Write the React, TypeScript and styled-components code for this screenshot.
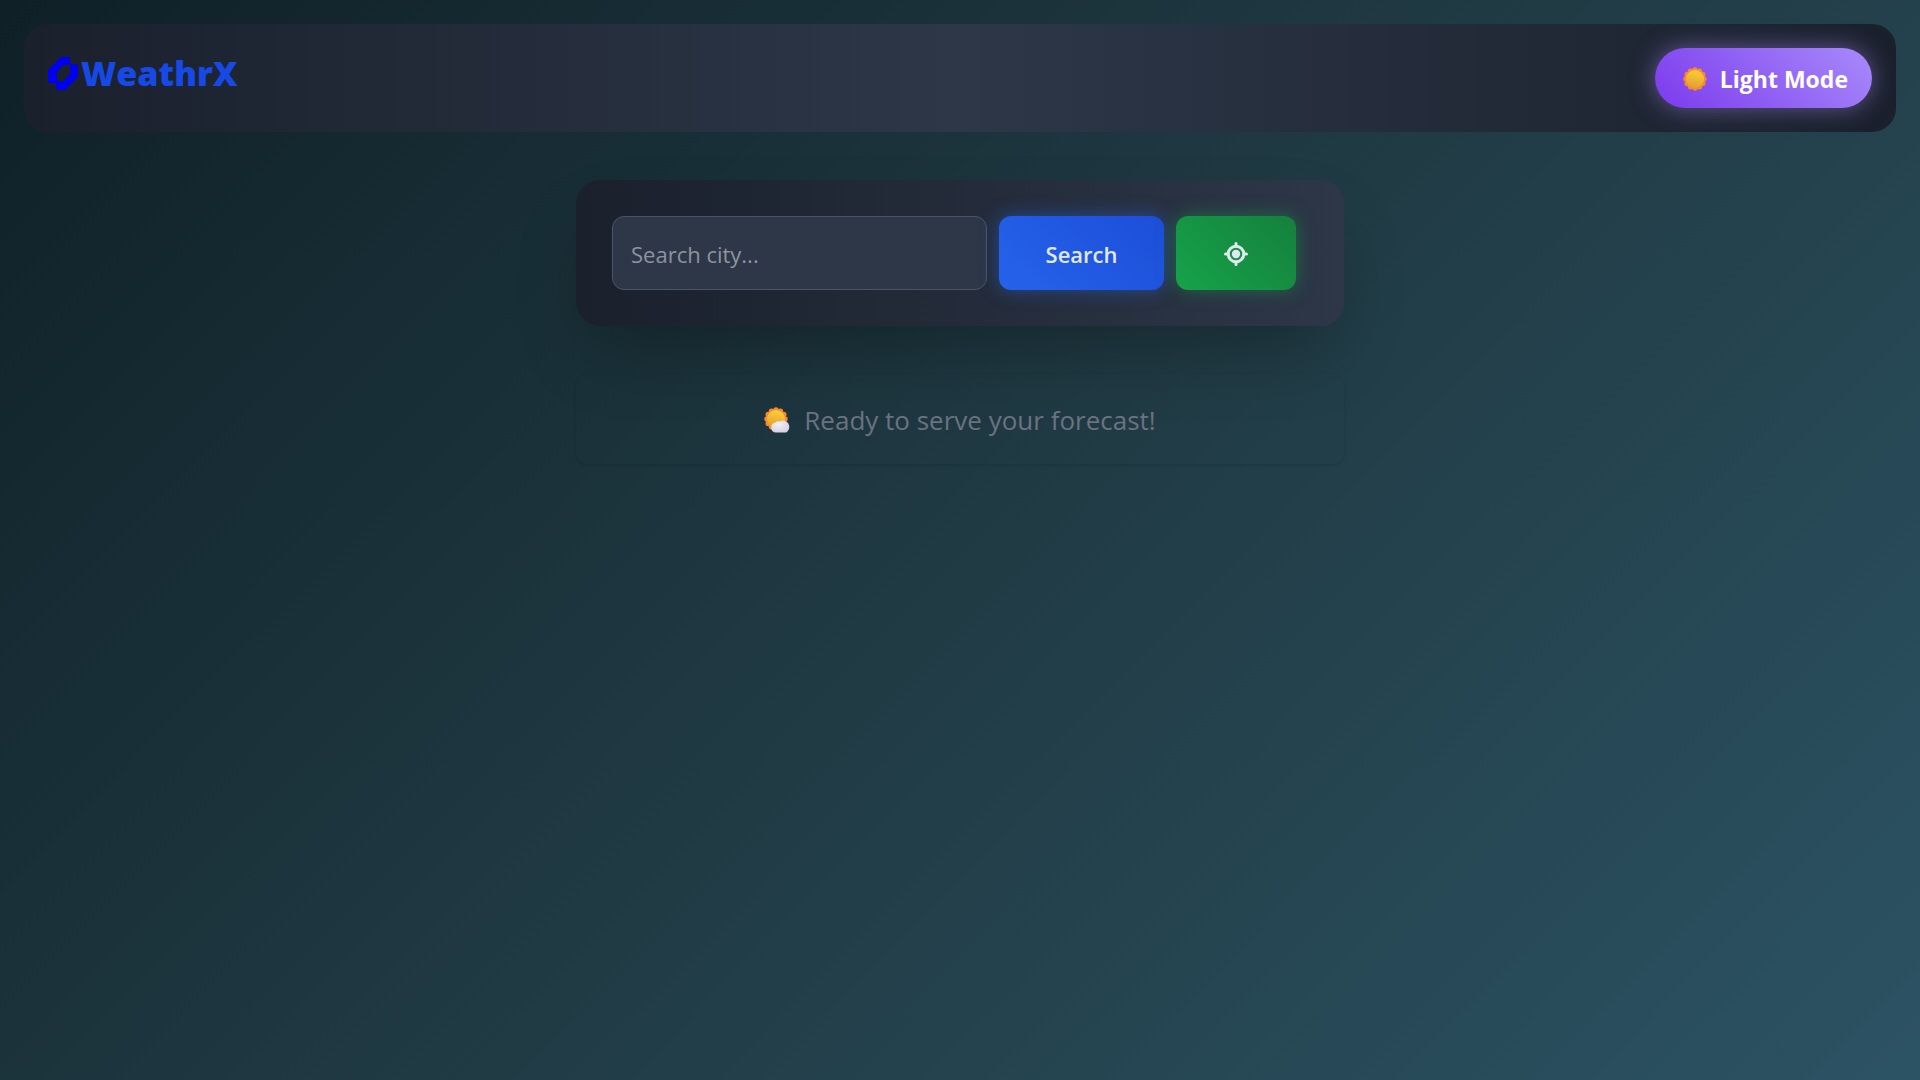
import React, { useState } from "react";
import styled, { createGlobalStyle } from "styled-components";

const GlobalStyle = createGlobalStyle`
  *, *::before, *::after { box-sizing: border-box; }
  body {
    margin: 0;
    min-height: 100vh;
    background: linear-gradient(135deg, #0f2027, #203a43, #2c5364) no-repeat;
    color: #e2e8f0;
    font-family: "Segoe UI", "Open Sans", "Noto Sans", sans-serif;
    font-size: 22px;
  }
`;

const Page = styled.div`
  display: flex;
  flex-direction: column;
  gap: 48px;
  padding: 24px;
`;

const Header = styled.header`
  display: flex;
  justify-content: space-between;
  align-items: flex-start;
  padding: 24px;
  border-radius: 24px;
  background: linear-gradient(90deg, #1a202c, #2d3748, #1a202c);
`;

const Brand = styled.a`
  display: flex;
  align-items: center;
  gap: 3px;
  color: #1749e6;
  font-size: 34px;
  font-weight: 800;
  line-height: 50px;
  text-decoration: none;
`;

const ModeButton = styled.button`
  display: flex;
  align-items: center;
  gap: 13px;
  height: 60px;
  padding: 2px 24px 0 28px;
  border: 0;
  border-radius: 30px;
  background: linear-gradient(45deg, #7c3aed, #a78bfa);
  box-shadow: 0 0 24px rgba(167, 139, 250, 0.5);
  color: #fff;
  font: inherit;
  font-size: 23px;
  font-weight: 700;
  cursor: pointer;
`;

const Main = styled.main`
  display: flex;
  flex-direction: column;
  gap: 48px;
  width: 100%;
  max-width: 768px;
  margin: 0 auto;
`;

const SearchForm = styled.form`
  display: flex;
  gap: 12px;
  padding: 36px 48px 36px 36px;
  border-radius: 24px;
  background: linear-gradient(90deg, #1a202c, #2d3748);
  box-shadow: 0 36px 75px -18px rgba(0, 0, 0, 0.3);
`;

const CityInput = styled.input`
  flex: 1;
  min-width: 0;
  height: 74px;
  padding: 2px 18px 0;
  border: 1px solid #4a5568;
  border-radius: 12px;
  background: #2d3748;
  color: #e2e8f0;
  font: inherit;
  &::placeholder { color: #8c949f; opacity: 1; }
`;

const ActionButton = styled.button<{ $from: string; $to: string; $glow: string; $width: number }>`
  display: flex;
  align-items: center;
  justify-content: center;
  width: ${(p) => p.$width}px;
  height: 74px;
  padding: 2px 0 0;
  border: 0;
  border-radius: 12px;
  background: linear-gradient(45deg, ${(p) => p.$from}, ${(p) => p.$to});
  box-shadow: 0 0 18px ${(p) => p.$glow};
  color: #e2e8f0;
  font: inherit;
  font-weight: 600;
  cursor: pointer;
`;

const Status = styled.p`
  display: flex;
  align-items: center;
  justify-content: center;
  gap: 12px;
  margin: 0;
  padding: 25px 24px 23px;
  border-radius: 12px;
  box-shadow: 0 1px 3px rgba(0, 0, 0, 0.15);
  color: #6b7280;
  font-size: 26px;
  font-weight: 500;
  line-height: 42px;
`;

const LogoMark = () => (
  <svg width="30" height="33" viewBox="0 0 30 33" aria-hidden="true">
    <path
      fill="#0000ee"
      fillRule="evenodd"
      d="M13 0H22V6L24 7.500H30V20L17 33H8V27L7 26H0V13ZM15 8L9 15V22L11 24.500H15L22 17V8Z"
    />
  </svg>
);

const petals = Array.from({ length: 12 }, (_, i) => {
  const a = (i * Math.PI) / 6;
  return { x: 12 + 9 * Math.sin(a), y: 12 - 9 * Math.cos(a) };
});

const SunShape = () => (
  <g>
    <g fill="#f98a2b">
      {petals.map((p, i) => (
        <circle key={i} cx={p.x} cy={p.y} r="2.7" />
      ))}
      <circle cx="12" cy="12" r="10" />
    </g>
    <circle cx="12" cy="12" r="9" fill="url(#sunFace)" />
  </g>
);

const SunFace = () => (
  <linearGradient id="sunFace" x1="0.6" y1="0" x2="0.4" y2="1">
    <stop offset="0" stopColor="#ffcd3a" />
    <stop offset="1" stopColor="#dfa12f" />
  </linearGradient>
);

const SunIcon = () => (
  <svg width="24" height="24" viewBox="0 0 24 24" aria-hidden="true">
    <defs><SunFace /></defs>
    <SunShape />
  </svg>
);

const SunCloudIcon = () => (
  <svg width="28" height="26" viewBox="0 0 28 26" aria-hidden="true">
    <defs>
      <radialGradient id="cloudFill" cx="0.4" cy="0.35" r="0.75">
        <stop offset="0" stopColor="#f1f0f5" />
        <stop offset="1" stopColor="#d3cce3" />
      </radialGradient>
    </defs>
    <SunShape />
    <path
      fill="url(#cloudFill)"
      d="M12 25.500a5 5 0 0 1-.8-9.900 4 4 0 0 1 4.500-1.200 6.400 6.400 0 1 1 6.500 11.100Z"
    />
  </svg>
);

const LocateIcon = () => (
  <svg width="24" height="24" viewBox="0 0 24 24" fill="none" stroke="#e2e8f0" aria-hidden="true">
    <circle cx="12" cy="12" r="7.800" strokeWidth="3" />
    <circle cx="12" cy="12" r="4.200" fill="#e2e8f0" stroke="none" />
    <path strokeWidth="3" strokeLinecap="round" d="M12 1.500V4M12 20v2.500M1.500 12H4M20 12h2.500" />
  </svg>
);

export default function App() {
  const [city, setCity] = useState("");
  return (
    <>
      <GlobalStyle />
      <Page>
        <Header>
          <Brand href="#">
            <LogoMark />
            WeathrX
          </Brand>
          <ModeButton type="button">
            <SunIcon />
            Light Mode
          </ModeButton>
        </Header>
        <Main>
          <SearchForm onSubmit={(e) => e.preventDefault()}>
            <CityInput
              aria-label="Search city"
              placeholder="Search city..."
              value={city}
              onChange={(e) => setCity(e.target.value)}
            />
            <ActionButton type="submit" $width={165} $from="#2563eb" $to="#1d4ed8" $glow="rgba(37, 99, 235, 0.5)">
              Search
            </ActionButton>
            <ActionButton
              type="button"
              aria-label="Use my location"
              $width={120}
              $from="#16a34a"
              $to="#15803d"
              $glow="rgba(22, 163, 74, 0.5)"
            >
              <LocateIcon />
            </ActionButton>
          </SearchForm>
          <Status>
            <SunCloudIcon />
            Ready to serve your forecast!
          </Status>
        </Main>
      </Page>
    </>
  );
}
